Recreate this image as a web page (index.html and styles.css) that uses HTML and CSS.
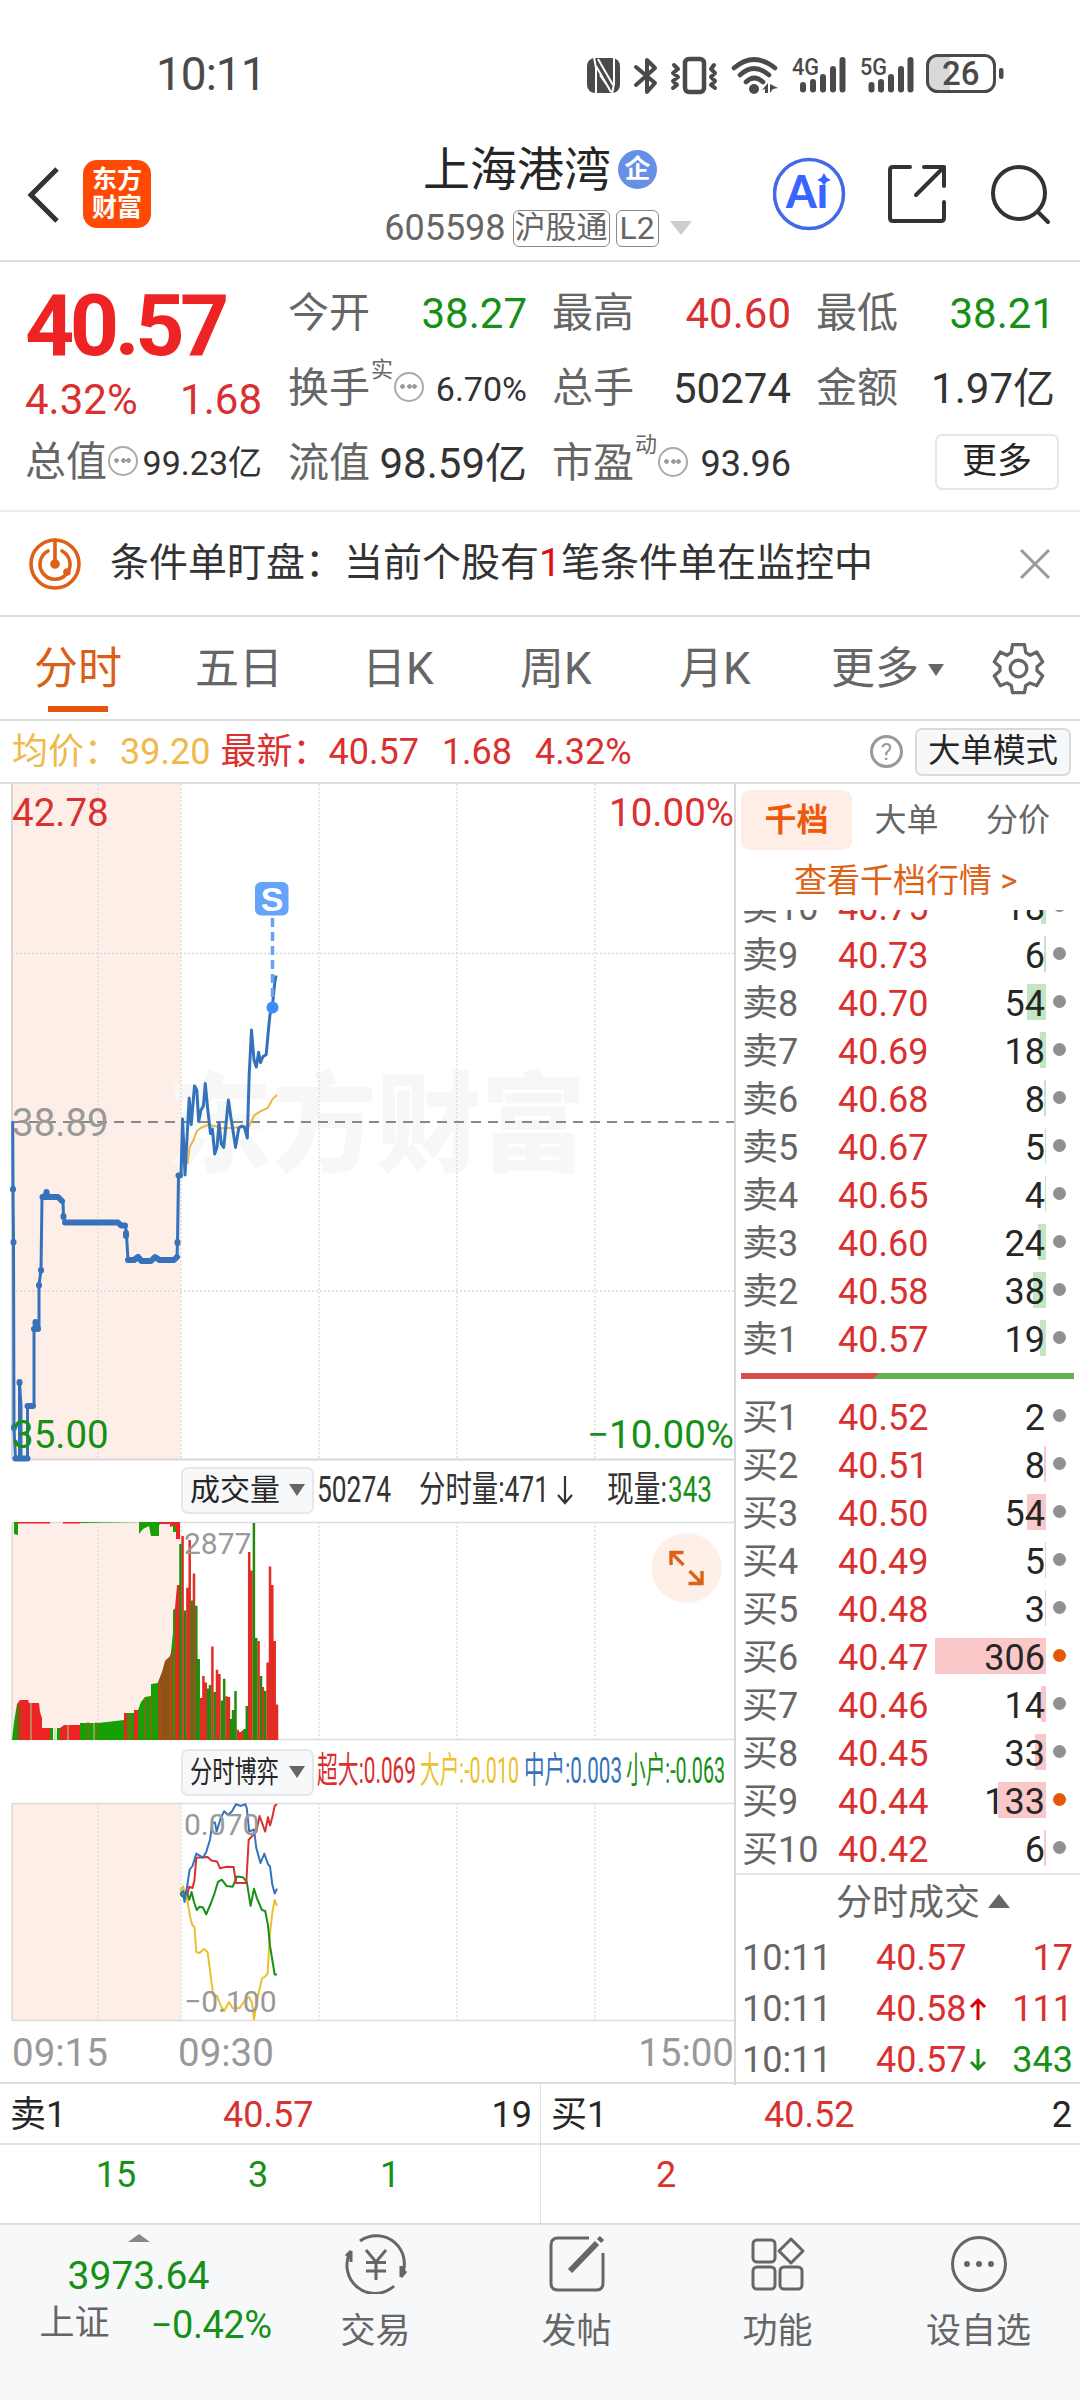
FILE: index.html
```html
<!DOCTYPE html>
<html lang="zh-CN">
<head>
    <meta charset="UTF-8">
    <meta name="viewport" content="width=device-width, initial-scale=1.0">
    <title>上海港湾 605598</title>
    <link rel="stylesheet" href="styles.css">
</head>
<body>
    <div class="status-bar">
        <span class="clock">10:11</span>
        <svg class="status-icons" width="430" height="44" viewBox="0 0 430 44">
            <!-- nfc -->
            <rect x="1" y="4" width="33" height="35" rx="8" fill="#4a4a4a"/>
            <path fill="none" stroke="#fff" stroke-width="2" d="M8 3L10 14V40M10 12L25 38M26 40L28 30V3M27 31L12 5M14 21L23 34"/>
            <!-- bluetooth -->
            <path fill="none" stroke="#4a4a4a" stroke-width="4" stroke-linejoin="round" stroke-linecap="round" d="M50 13L69 29L61 38V6L69 14L50 31"/>
            <!-- vibrate -->
            <rect x="99" y="5" width="19" height="33" rx="4" fill="none" stroke="#4a4a4a" stroke-width="4.5"/>
            <path fill="none" stroke="#4a4a4a" stroke-width="4" stroke-linecap="round" stroke-linejoin="round" d="M88 11L92 15L87 19L92 23L87 27L91 31L87 34M128 11L125 15L129 19L125 23L129 27L125 31L129 34"/>
            <!-- wifi -->
            <g fill="none" stroke="#4a4a4a" stroke-width="4.6" stroke-linecap="round">
                <path d="M148 14Q168 -3 189 14"/>
                <path d="M154 21Q168 8 183 21"/>
                <path d="M160 28Q168 20 177 28"/>
            </g>
            <circle cx="168" cy="35" r="5" fill="#4a4a4a"/>
            <path fill="#4a4a4a" d="M182 29V39H179V35L176 36ZM184 30L192 34L187 35L184 39Z"/>
            <!-- signals -->
            <text x="206" y="21" class="net" textLength="27" lengthAdjust="spacingAndGlyphs">4G</text>
            <text x="274" y="21" class="net" textLength="27" lengthAdjust="spacingAndGlyphs">5G</text>
            <g stroke="#4a4a4a" stroke-width="6" stroke-linecap="round">
                <path d="M217 31V35.500M227 28V35.500M237 23V35.500M247 15V35.500M256.500 6V35.500"/>
                <path d="M285.500 31V35.500M295 28V35.500M305 23V35.500M315 15V35.500M324.500 6V35.500"/>
            </g>
            <!-- battery -->
            <path fill="#d9d9d9" d="M352 2H364V38H352Q342 38 342 28V12Q342 2 352 2Z"/>
            <rect x="341.500" y="1.500" width="67" height="36" rx="10" fill="none" stroke="#4a4a4a" stroke-width="3"/>
            <rect x="413" y="14" width="4.500" height="11" rx="2" fill="#4a4a4a"/>
            <text x="356" y="31" class="level">26</text>
        </svg>
    </div>

    <header class="header">
        <svg class="back" width="36" height="60" viewBox="0 0 36 60"><path d="M30 4L4 30L30 56" fill="none" stroke="#333" stroke-width="5"/></svg>
        <div class="logo"><span>东方</span><span>财富</span></div>
        <div class="title">
            <div class="name">上海港湾<i class="corp">企</i></div>
            <div class="code">605598<span class="tag">沪股通</span><span class="tag">L2</span><i class="caret"></i></div>
        </div>
        <div class="actions">
            <svg width="74" height="74" viewBox="0 0 74 74">
                <circle cx="36" cy="37" r="34.500" fill="none" stroke="#4169e8" stroke-width="3.500"/>
                <text x="13" y="51" class="ai" textLength="42" lengthAdjust="spacingAndGlyphs">Ai</text>
                <rect x="43" y="15" width="16" height="13" fill="#fff"/>
                <path d="M51 16L53.500 20.500L58 23L53.500 25L51 29L48.500 25L44 23L48.500 20.500Z" fill="#3964fe"/>
            </svg>
            <svg width="60" height="60" viewBox="0 0 60 60" fill="none" stroke="#333" stroke-width="4" stroke-linecap="round" stroke-linejoin="round">
                <path d="M22 3H5Q2 3 2 6V54Q2 57 5 57H53Q56 57 56 54V38M36 3H56V22M56 3L28 31"/>
            </svg>
            <svg width="62" height="62" viewBox="0 0 62 62" fill="none" stroke="#333" stroke-width="4" stroke-linecap="round">
                <circle cx="30" cy="30" r="26"/><path d="M49 49L59 59"/>
            </svg>
        </div>
    </header>

    <section class="quote">
        <div class="last">
            <div class="price">40.57</div>
            <div class="change"><span>4.32%</span><span>1.68</span></div>
            <div class="cell"><label>总值<i class="dots"></i></label><b class="s33">99.23亿</b></div>
        </div>
        <div class="cells">
            <div class="cell"><label>今开</label><b class="green">38.27</b></div>
            <div class="cell"><label>最高</label><b class="red">40.60</b></div>
            <div class="cell"><label>最低</label><b class="green">38.21</b></div>
            <div class="cell"><label>换手<sup>实</sup><i class="dots"></i></label><b class="s33">6.70%</b></div>
            <div class="cell"><label>总手</label><b>50274</b></div>
            <div class="cell"><label>金额</label><b>1.97亿</b></div>
            <div class="cell"><label>流值</label><b>98.59亿</b></div>
            <div class="cell"><label>市盈<sup>动</sup><i class="dots"></i></label><b class="s36">93.96</b></div>
            <div class="cell end"><button class="more">更多</button></div>
        </div>
    </section>

    <div class="notice">
        <svg width="54" height="54" viewBox="0 0 54 54" fill="none" stroke="#dd6217" stroke-width="3.600">
            <circle cx="27" cy="27" r="24"/>
            <path d="M20 14A15 15 0 1 0 34 14M27 3V27" stroke-linecap="round"/>
            <circle cx="27" cy="27" r="3" fill="#dd6217"/><circle cx="39" cy="35" r="2" fill="#dd6217"/>
        </svg>
        <p>条件单盯盘：当前个股有<em>1</em>笔条件单在监控中</p>
        <svg width="32" height="32" viewBox="0 0 32 32"><path d="M2 2L30 30M30 2L2 30" stroke="#999" stroke-width="3"/></svg>
    </div>

    <nav class="periods">
        <a class="active">分时</a>
        <a>五日</a>
        <a>日K</a>
        <a>周K</a>
        <a>月K</a>
        <a>更多<i class="caret"></i></a>
        <svg width="53" height="53" viewBox="875 125 160 160" fill="none" stroke="#666" stroke-width="10" stroke-linejoin="round">
            <path d="M937 133H973L977 157L990 165L1010 155L1028 185L1011 200V212L1028 227L1010 257L990 249L977 256L973 278H937L933 256L920 249L900 257L882 227L899 212V200L882 185L900 155L920 165L933 157Z"/>
            <circle cx="955" cy="205" r="25"/>
        </svg>
    </nav>

    <div class="summary">
        <span class="avg">均价：</span><span class="avg num">39.20</span>
        <span class="red">最新：</span><span class="red num">40.57</span><span class="red num">1.68</span><span class="red num">4.32%</span>
        <i class="help">?</i>
        <button class="mode">大单模式</button>
    </div>

    <main class="board">
        <div class="charts">
            <!-- price -->
            <svg class="plot" width="734" height="678" viewBox="0 0 734 678">
                <rect x="12" y="0" width="169" height="675" fill="#fdeee7"/>
                <text x="167" y="379" class="watermark" textLength="419" lengthAdjust="spacingAndGlyphs">东方财富</text>
                <path class="grid" d="M98 0V675M181 0V675M319 0V675M457 0V675M595 0V675M12 169.500H734M12 507H734"/>
                <path d="M12 0V675M12 675.500H734" stroke="#d8d8d8" stroke-width="2"/>
                <path d="M12 338H734" stroke="#888" stroke-width="2" stroke-dasharray="10 7"/>
                <text x="12" y="42" class="axis" fill="#d93030">42.78</text>
                <text x="734" y="42" class="axis" fill="#d93030" text-anchor="end">10.00%</text>
                <text x="12" y="352" class="axis" fill="#999">38.89</text>
                <text x="734" y="664" class="axis" fill="#169016" text-anchor="end">−10.00%</text>
                <path fill="none" stroke="#ebb54a" stroke-width="2" d="M187.400 380L189.700 363L193.500 356L196.800 347L201 343.800L207.600 341L214.700 342L221.800 344.200L233.600 343.800L249 342L254.800 330.800L260.500 327.300L267.600 324L272.800 314.800L277 311"/>
                <path class="line" d="M12.700 337.500L13 405L13.500 458L14 643L15.500 675H19.500V598L21 622V675H27.500V622H34V545H39V501L41 486L42 413L46.500 408L50.500 413H59L63 417L63.500 433L64.500 438H118L121 441.500H125.500L126.500 451L128 476H134L138 472L141.500 477H151L155 473L159.500 475L174.500 476L177 473L177.500 458L178.500 391.500H181L182.600 335L185 391L189.200 314L191.200 340.600L194.500 302L196.800 306L198.700 337.500L201 326L203.400 322L205.300 299.600L207.600 324L210.500 349.600L212.400 345L214.700 370L217 363L219 339L221.300 360L223.700 363.400L228.400 316L230.800 333L233 346.400L235.500 363.400L238.800 344L242 342L244.500 343.300L247.300 354L249.200 290.600L251.500 246L254 276L256.300 283L258.600 268.300L260.500 278.600L262.900 272.800L266.200 270.500L268 250.500L270 230.400L272.300 223.200L274.700 199L276 191.500"/>
                <path class="ticks" d="M15.500 674.500H27.500M27.500 622H33M34 545H38M35.500 538V540M42.500 413H51M46.500 408V410M51 413H58L62 417M63.500 432V433M65 438.500H118L121 441.500H125M126 449V452M128 476H134L138 473L141.500 477H151L155 473L159.500 476H174L177 473M177.500 458V459M178.500 391.500H180M13 405V405.500M13.500 458V458.500M39 501V501.500M41 486V486.500M19.500 598V599M14 643V644"/>
                <text x="12" y="664" class="axis" fill="#169016">35.00</text>
                <path d="M272.500 134V220" stroke="#69a2f0" stroke-width="3.500" stroke-dasharray="9 5"/>
                <circle cx="272.500" cy="223.500" r="6" fill="#3e8bfa"/>
                <rect x="255" y="98" width="33.500" height="33.500" rx="6" fill="#66a3fb"/>
                <text x="272" y="126.500" class="badge" text-anchor="middle">S</text>
            </svg>

            <div class="toolbar volume">
                <button class="picker"><span>成交量</span><i class="caret"></i></button>
                <svg width="420" height="50" viewBox="0 0 420 50">
                    <text x="3" y="37" fill="#333" textLength="74" lengthAdjust="spacingAndGlyphs">50274</text>
                    <text x="105" y="37" fill="#333" textLength="130" lengthAdjust="spacingAndGlyphs">分时量:471</text>
                    <path d="M251 11V38M244 30L251 38L258 30" fill="none" stroke="#333" stroke-width="2.200"/>
                    <text x="293" y="37" fill="#333" textLength="60" lengthAdjust="spacingAndGlyphs">现量:</text>
                    <text x="354" y="37" fill="#169016" textLength="44" lengthAdjust="spacingAndGlyphs">343</text>
                </svg>
            </div>

            <svg class="plot" width="734" height="224" viewBox="0 -4 734 224">
                <rect x="12" y="0" width="169" height="218" fill="#fdeee7"/>
                <path class="grid" d="M98 0V218M181 0V218M319 0V218M457 0V218M595 0V218"/>
                <path d="M12 0V218M12 .5H734M12 217.500H734" stroke="#dcdcdc" stroke-width="1.500"/>
                <!-- call auction -->
                <path fill="#17a006" d="M12 218L14 200L17 182V218ZM50 218V206H53V218ZM57 218V206H60V218ZM80 218V201H98L124 198V218ZM127 218V191H134V218ZM138 218V188L141 180L145 175L151 174V162L158 161V218ZM170 218V140L173 110V88L176 86V218Z"/>
                <path fill="#ee2424" d="M17 218V182L20 178H28L29 181H39L40 190L42 196V206H50V218ZM60 218V206L64 203H80V218ZM124 218V191H127V218ZM134 218V188H138V218ZM158 218V161H160V218ZM175 218V86L177 63H180V218Z"/>
                <path fill="#8f5316" d="M17 218V182H21V218ZM158 218V160L162 150L165 139L170 134L173 125V218Z"/>
                <path stroke="#e03a26" stroke-width="1" d="M88 200V218M96 200V218M130 192V218M145 176V218M151 174V218M160 160V218M171 134V218"/>
                <path stroke="#8ce08c" stroke-width="1" d="M55 206V218M68 203V218M94 201V218M31 181V218"/>
                <path fill="#17a006" d="M14 0H18V13L14 12ZM80 0H139V12L143 7L149 4L151 14H159V3L163 0H80V1H139ZM173 0V10H176V0Z"/>
                <path fill="#ee2424" d="M18 0H50V1.500H18ZM63 0H80V1.500H63ZM159 0H180V17H176V3L170 5V2H159Z"/>
                <!-- continuous trading -->
                <path class="bar up" d="M182.600 14V218M187.400 65.800V218M189.700 18V218M194 51.500V218M201 176V218M203.400 154V218M205.800 160.500V218M212.400 124.500V218M217 147.800V218M219.400 152V218M226.500 174.300V218M228.900 175V218M237.800 207.800V218M240.200 210V218M242.600 208.600V218M249.200 30V218M251.500 48.600V218M258.600 119V218M262.900 165V218M267.600 140.400V218M270 44.500V218M272.300 63V218M274.700 119V218M277 182.500V218"/>
                <path class="bar down" d="M180.500 22V218M185 88.600V218M192 78.400V218M196.300 83.700V218M198.700 137V218M208 166.600V218M210 163V218M214.700 170V218M221.800 178.400V218M224.200 156.800V218M230.800 197V218M233 188V218M235.500 169V218M244.500 207V218M246.800 184V218M253.900 1V218M256.300 116V218M261 154V218M265.200 169V218"/>
                <text x="184" y="32" class="scale">2877</text>
                <circle cx="686.500" cy="46" r="35" fill="#feefe8"/>
                <path fill="none" stroke="#dd6217" stroke-width="3.400" d="M683.500 30.500H671V43M671.500 31L683.500 43M689.500 49L701.500 61M688.500 61.500H702V49"/>
            </svg>

            <div class="toolbar">
                <button class="picker"><span>分时博弈</span><i class="caret"></i></button>
                <svg width="420" height="50" viewBox="0 0 420 50">
                    <text x="3" y="36" fill="#d93030" textLength="99" lengthAdjust="spacingAndGlyphs">超大:0.069</text>
                    <text x="106" y="36" fill="#ecc02c" textLength="99" lengthAdjust="spacingAndGlyphs">大户:-0.010</text>
                    <text x="210" y="36" fill="#3572bb" textLength="98" lengthAdjust="spacingAndGlyphs">中户:0.003</text>
                    <text x="312" y="36" fill="#169016" textLength="99" lengthAdjust="spacingAndGlyphs">小户:-0.063</text>
                </svg>
            </div>

            <svg class="plot" width="734" height="221" viewBox="0 -1 734 221">
                <rect x="12" y="0" width="169" height="218" fill="#fdeee7"/>
                <path class="grid" d="M98 0V218M181 0V218M319 0V218M457 0V218M595 0V218"/>
                <path d="M12 0V218M12 .5H734M12 217.500H734" stroke="#dcdcdc" stroke-width="1.500"/>
                <g fill="none" stroke-width="2" stroke-linejoin="round">
                    <path stroke="#ecc02c" d="M180.300 88L183 83.300L187.400 98L190.200 114.300L192.500 122.400L194.500 124L196.300 149L199.600 150L204 146L207.600 149L210.500 171.400L213.300 192.700H217L220.400 202L224.200 208L229 199L232.700 205.300H239.300L245.400 196.700L249.200 194L252 200L254 216.300L257.200 196L262 175.500L265.200 173.500L267.600 170.600L270 130.600L272.300 110L274.700 97L277 102.900"/>
                    <path stroke="#169016" d="M180.300 91L183 93.900L186.400 87.800L189.200 96.700L191.600 89L194 99L196.800 107L199.600 103.700L203 104.500L206.200 111.400L211 100L214.700 89.800L218 78.800L221.800 76.700L226.500 82.900L232.700 83.700L237 73.500L243 74.300L246.800 78.800L250.600 102.900L254 85.700L257.200 96L262 107L265.200 108L268 122.400L270 142.900L274.700 171.400H277"/>
                    <path stroke="#d93030" d="M187.400 91.800L189.200 83.700L192.500 85L194.400 77.600L196.300 54.700L207.600 54L211.400 57.600L217 58.400L220 65.300L226.500 63.700L233.600 64L236 80H246.300L248.700 36.700L253.400 31.800L256.300 28.600L259.600 13L265.200 28.600L268 14.300L270 22.400L272.300 14.300L274.700 2.900L277 1.200"/>
                    <path stroke="#3572bb" d="M180.300 91L183 88L184.500 99L187.400 81.600L189.700 66.500L192.500 63L196.300 50.600L203 54.700L206.200 49L210 36.700L212.400 19.600H215L216.600 28.600L221 14.300L224.200 8.200L228 12L232.200 8L236 1.200L240.700 2.900L245.400 1.200L246.800 5.300L249.200 28.600L254 26.500L256.300 45L260.500 60L264.300 50.600L268 61.200L270 63.300L272.300 81.600L274.700 90.600L277 85.700"/>
                </g>
                <text x="184" y="32" class="scale">0.070</text>
                <text x="184" y="209" class="scale">−0.100</text>
            </svg>

            <div class="times"><span>09:15</span><span>09:30</span><span>15:00</span></div>
        </div>

        <aside class="side">
            <div class="tabs"><a class="active">千档</a><a>大单</a><a>分价</a></div>
            <a class="link">查看千档行情 &gt;</a>
            <div class="book">
                <ul class="sell">
                    <li><span>卖10</span><em>40.75</em><b style="--w:5px">18</b><i></i></li>
                    <li><span>卖9</span><em>40.73</em><b style="--w:2px">6</b><i></i></li>
                    <li><span>卖8</span><em>40.70</em><b style="--w:19px">54</b><i></i></li>
                    <li><span>卖7</span><em>40.69</em><b style="--w:6px">18</b><i></i></li>
                    <li><span>卖6</span><em>40.68</em><b style="--w:2px">8</b><i></i></li>
                    <li><span>卖5</span><em>40.67</em><b style="--w:1px">5</b><i></i></li>
                    <li><span>卖4</span><em>40.65</em><b style="--w:1px">4</b><i></i></li>
                    <li><span>卖3</span><em>40.60</em><b style="--w:8px">24</b><i></i></li>
                    <li><span>卖2</span><em>40.58</em><b style="--w:13px">38</b><i></i></li>
                    <li><span>卖1</span><em>40.57</em><b style="--w:6px">19</b><i></i></li>
                </ul>
                <div class="ratio"></div>
                <ul class="buy">
                    <li><span>买1</span><em>40.52</em><b style="--w:0px">2</b><i></i></li>
                    <li><span>买2</span><em>40.51</em><b style="--w:2px">8</b><i></i></li>
                    <li><span>买3</span><em>40.50</em><b style="--w:19px">54</b><i></i></li>
                    <li><span>买4</span><em>40.49</em><b style="--w:1px">5</b><i></i></li>
                    <li><span>买5</span><em>40.48</em><b style="--w:1px">3</b><i></i></li>
                    <li><span>买6</span><em>40.47</em><b style="--w:111px">306</b><i class="big"></i></li>
                    <li><span>买7</span><em>40.46</em><b style="--w:5px">14</b><i></i></li>
                    <li><span>买8</span><em>40.45</em><b style="--w:11px">33</b><i></i></li>
                    <li><span>买9</span><em>40.44</em><b style="--w:48px">133</b><i class="big"></i></li>
                    <li><span>买10</span><em>40.42</em><b style="--w:2px">6</b><i></i></li>
                </ul>
            </div>
            <div class="deals-title">分时成交<i class="caret up"></i></div>
            <ul class="deals">
                <li><span>10:11</span><em>40.57</em><b class="red">17</b></li>
                <li><span>10:11</span><em>40.58<svg width="18" height="24" viewBox="0 0 18 24"><path d="M9 23V3M2 10L9 3L16 10" fill="none" stroke="#d80000" stroke-width="3"/></svg></em><b class="red">111</b></li>
                <li><span>10:11</span><em>40.57<svg width="18" height="24" viewBox="0 0 18 24"><path d="M9 1V21M2 14L9 21L16 14" fill="none" stroke="#169016" stroke-width="3"/></svg></em><b class="green">343</b></li>
            </ul>
        </aside>
    </main>

    <section class="queues">
        <div class="queue">
            <div class="queue-head"><span>卖1</span><em>40.57</em><b>19</b></div>
            <div class="queue-body green"><span>15</span><span>3</span><span>1</span></div>
        </div>
        <div class="queue">
            <div class="queue-head"><span>买1</span><em>40.52</em><b>2</b></div>
            <div class="queue-body red"><span>2</span></div>
        </div>
    </section>

    <footer class="footer">
        <div class="index">
            <i class="caret up"></i>
            <strong>3973.64</strong>
            <div><span>上证</span><span class="green">−0.42%</span></div>
        </div>
        <a>
            <svg width="68" height="60" viewBox="0 0 68 60" fill="none" stroke="#666" stroke-width="3">
                <path d="M18 7A28 28 0 0 1 59 43L64 37M59 43V32M52 52A28 28 0 0 1 9 17L4 22M9 17V28"/>
                <path d="M24 16L34 28L44 16M34 28V46M24 28.500H44M24 37H44"/>
            </svg>
            交易
        </a>
        <a>
            <svg width="60" height="60" viewBox="0 0 60 60" fill="none" stroke="#666" stroke-width="3">
                <path d="M42 4H11Q4 4 4 11V49Q4 56 11 56H49Q56 56 56 49V19"/>
                <path d="M23 37L50 9" stroke-width="6"/><path d="M52 7L55 4" stroke-width="6"/>
            </svg>
            发帖
        </a>
        <a>
            <svg width="60" height="60" viewBox="0 0 60 60" fill="none" stroke="#666" stroke-width="3">
                <rect x="5" y="6" width="22" height="22" rx="4"/>
                <rect x="5" y="33" width="22" height="22" rx="4"/>
                <rect x="32" y="33" width="22" height="22" rx="4"/>
                <path d="M43 5L55 17L43 29L31 17Z" stroke-linejoin="round"/>
            </svg>
            功能
        </a>
        <a>
            <svg width="60" height="60" viewBox="0 0 60 60">
                <circle cx="30" cy="30" r="26.500" fill="none" stroke="#666" stroke-width="3"/>
                <circle cx="18" cy="30" r="3" fill="#666"/><circle cx="30" cy="30" r="3" fill="#666"/><circle cx="42" cy="30" r="3" fill="#666"/>
            </svg>
            设自选
        </a>
    </footer>
</body>
</html>
```
FILE: styles.css
```css
* {
    box-sizing: border-box;
    margin: 0;
    padding: 0;
}
body {
    width: 1080px;
    height: 2400px;
    overflow: hidden;
    background: #fff;
    color: #333;
    font-family: Roboto, "Noto Sans CJK SC", sans-serif;
    font-size: 36px;
    line-height: 1;
    white-space: nowrap;
    display: flex;
    flex-direction: column;
}
em, i {
    font-style: normal;
}
b {
    font-weight: normal;
}
ul {
    list-style: none;
}
svg {
    display: block;
    flex: none;
}
button {
    font-family: inherit;
    color: #262626;
    background: #fff;
    border: 2px solid #e6e6e6;
    border-radius: 7px;
    line-height: 1;
}
.red {
    color: #d93030;
}
.green {
    color: #169016;
}
.caret {
    display: inline-block;
    border: 8px solid transparent;
    border-top: 12px solid #666;
    border-bottom: 0;
}
.caret.up {
    border-top: 0;
    border-bottom: 12px solid #666;
}

/* status bar */
.status-bar {
    height: 130px;
    padding: 54px 64px 0 156px;
    display: flex;
    justify-content: space-between;
}
.clock {
    color: #4a4a4a;
    font-size: 46px;
    line-height: 40px;
    letter-spacing: -1px;
}
.net {
    font-size: 24px;
    font-weight: 500;
    fill: #4a4a4a;
}
.level {
    font-size: 33px;
    font-weight: 500;
    fill: #4a4a4a;
}

/* header */
.header {
    height: 132px;
    border-bottom: 2px solid #dcdcdc;
    display: grid;
    grid-template-columns: 56px 68px 1fr 278px;
    padding: 0 29px 0 27px;
}
.back {
    margin-top: 35px;
}
.logo {
    width: 68px;
    height: 68px;
    margin-top: 30px;
    border-radius: 14px;
    background: #ff4a05;
    color: #fff;
    font-size: 25px;
    font-weight: bold;
    line-height: 28px;
    padding-top: 6px;
    display: flex;
    flex-direction: column;
    align-items: center;
}
.title {
    display: flex;
    flex-direction: column;
    align-items: center;
    padding-left: 152px;
}
.name {
    display: flex;
    align-items: center;
    gap: 7px;
    height: 60px;
    margin-top: 9px;
    font-size: 47px;
    color: #262626;
    padding-left: 4px;
}
.corp {
    width: 39px;
    height: 39px;
    border-radius: 50%;
    background: #668fe6;
    color: #fff;
    font-size: 26px;
    font-weight: bold;
    line-height: 38px;
    text-align: center;
}
.code {
    display: flex;
    align-items: center;
    height: 38px;
    margin-top: 10px;
    color: #666;
}
.tag {
    height: 37px;
    border: 1.500px solid #888;
    border-radius: 6px;
    font-size: 31px;
    line-height: 34px;
    padding: 0 1px;
    margin-left: 7px;
}
.tag + .tag {
    padding: 0 3px;
    font-size: 32px;
    margin-left: 6px;
}
.code .caret {
    border-width: 14px 11px 0;
    border-top-color: #ccc;
    margin-left: 11px;
}
.actions {
    display: flex;
    align-items: center;
    justify-content: space-between;
    height: 128px;
}
.ai {
    font-family: Lato, sans-serif;
    font-size: 45px;
    font-weight: 900;
    fill: #3964fe;
}

/* quote */
.quote {
    height: 250px;
    padding: 14px 26px 0 25px;
    border-bottom: 2px solid #ebebeb;
    display: grid;
    grid-template-columns: 237px 766px;
    gap: 26px;
}
.price {
    height: 99px;
    color: #ee2424;
    font-size: 86px;
    font-weight: bold;
    line-height: 99px;
    letter-spacing: -4.500px;
}
.change {
    height: 50px;
    color: #d93030;
    font-size: 42px;
    line-height: 50px;
    display: flex;
    justify-content: space-between;
}
.cells {
    display: grid;
    grid-template-columns: repeat(3, 239px);
    grid-auto-rows: 75px;
    column-gap: 25px;
}
.cell {
    height: 75px;
    display: flex;
    align-items: center;
    justify-content: space-between;
    font-size: 42px;
}
.cell label {
    display: flex;
    align-items: center;
    color: #666;
    font-size: 41px;
}
.cell sup {
    align-self: flex-start;
    font-size: 22px;
    margin: -9px 0 0 1px;
}
.dots {
    width: 30px;
    height: 30px;
    margin: -4px 0 0 1px;
    border: 2.500px solid #aaa;
    border-radius: 50%;
    background: radial-gradient(circle, #999 2px, transparent 2.500px) 50% 50% / 7px 7px no-repeat,
        radial-gradient(circle, #999 2px, transparent 2.500px) 3px 50% / 7px 7px no-repeat,
        radial-gradient(circle, #999 2px, transparent 2.500px) 15px 50% / 7px 7px no-repeat;
}
.cell .s33 {
    font-size: 34px;
}
.cell .s36 {
    font-size: 36px;
}
.cell.end {
    justify-content: flex-end;
    margin-right: -4px;
}
.more {
    width: 124px;
    height: 56px;
    margin-top: -4px;
    font-size: 35px;
}

/* notice */
.notice {
    height: 105px;
    padding: 0 29px 0 28px;
    border-bottom: 2px solid #dcdcdc;
    display: flex;
    align-items: center;
    font-size: 39px;
}
.notice p {
    flex: 1;
    margin-left: 28px;
}
.notice em {
    color: #e01010;
}

/* period tabs */
.periods {
    height: 104px;
    padding: 0 0 0 34px;
    border-bottom: 2px solid #dcdcdc;
    display: grid;
    grid-template-columns: 161px 167px 158px 159px 152px 161px 53px;
    align-items: center;
    justify-items: start;
    color: #666;
    font-size: 44px;
}
.periods a {
    height: 102px;
    line-height: 104px;
}
.periods .active {
    color: #d95f18;
    background: linear-gradient(#e5570b, #e5570b) 50% 89px / 60px 6px no-repeat;
}
.periods .caret {
    margin-left: 9px;
    vertical-align: 8px;
}

.summary {
    height: 63px;
    padding: 0 9px 0 12px;
    border-bottom: 2px solid #dcdcdc;
    display: flex;
    align-items: center;
}
.summary .num {
    margin-right: 23px;
}
.summary .avg {
    color: #efb94c;
}
.summary .avg.num {
    margin-right: 10px;
}
.help {
    width: 33px;
    height: 33px;
    margin-left: auto;
    margin-right: 12px;
    border: 3px solid #999;
    border-radius: 50%;
    color: #999;
    font-size: 24px;
    line-height: 28px;
    text-align: center;
}
.mode {
    width: 156px;
    height: 48px;
    font-size: 32.500px;
    background: #f7f8fa;
    border-color: #d8dadc;
}

/* charts */
.board {
    height: 1300px;
    display: grid;
    grid-template-columns: 734px 346px;
    border-bottom: 2px solid #dcdcdc;
}
.grid {
    stroke: #dadada;
    stroke-width: 1.300;
    stroke-dasharray: 2 2;
}
.axis {
    font-size: 38.500px;
}
.watermark {
    font-size: 108px;
    font-weight: 900;
    fill: #f7f7f7;
}
.line {
    fill: none;
    stroke: #3572bb;
    stroke-width: 3;
    stroke-linejoin: round;
}
.ticks {
    fill: none;
    stroke: #3572bb;
    stroke-width: 6;
    stroke-linecap: round;
    stroke-linejoin: round;
}
.badge {
    font-family: "Liberation Sans", sans-serif;
    font-size: 34px;
    font-weight: bold;
    fill: #fff;
}
.bar {
    stroke-width: 2.500;
}
.bar.up {
    stroke: #e22c24;
}
.bar.down {
    stroke: #258a0c;
}
.scale {
    font-size: 30px;
    fill: #999;
}
.toolbar {
    height: 60px;
    padding-left: 181px;
    display: flex;
    align-items: center;
}
.toolbar.volume {
    height: 56px;
}
.picker {
    width: 133px;
    height: 47px;
    font-size: 30px;
    background: #f7f8fa;
    border-color: #e6e7ea;
    display: flex;
    align-items: center;
    justify-content: space-between;
    padding: 0 7px;
}
.toolbar:not(.volume) .picker span {
    width: 88px;
    transform: scaleX(.74);
    transform-origin: 0 50%;
}
.toolbar svg {
    font-size: 36px;
}
.times {
    height: 60px;
    padding: 0 0 0 12px;
    display: flex;
    align-items: center;
    color: #999;
    font-size: 38.500px;
}
.times span {
    width: 166px;
}
.times span:last-child {
    width: auto;
    margin-left: auto;
}

/* order book */
.side {
    border-left: 2px solid #d8d8d8;
}
.tabs {
    height: 72px;
    padding: 6px 5px 0;
    display: grid;
    grid-template-columns: 111px 109px 114px;
    font-size: 32px;
    line-height: 61px;
    text-align: center;
    color: #666;
}
.tabs .active {
    height: 60px;
    border-radius: 9px;
    background: #feeee6;
    color: #ee5a0c;
    font-weight: bold;
}
.link {
    display: block;
    height: 54px;
    padding-left: 58px;
    color: #dd6217;
    font-size: 33px;
    line-height: 50px;
}
.book {
    height: 963px;
    overflow: hidden;
}
.sell {
    margin-top: -28px;
}
.book li {
    height: 48px;
    padding-left: 6px;
    display: grid;
    grid-template-columns: 96px 95px 115px 1fr;
    align-items: center;
}
.book span, .book em {
    line-height: 44px;
    padding-top: 4px;
}
.book span, .deals span {
    color: #666;
}
.book em, .deals em {
    color: #d93030;
}
.book b {
    width: 111px;
    height: 36px;
    line-height: 34px;
    padding: 3px 1px 0 0;
    margin-left: auto;
    margin-right: 2px;
    text-align: right;
    color: #262626;
    background: linear-gradient(#c2e6c3, #c2e6c3) 100% 0 / var(--w) 100% no-repeat;
}
.book .buy b {
    background-image: linear-gradient(#fac8c8, #fac8c8);
}
.book i {
    width: 13px;
    height: 13px;
    margin: 0 0 2px 5px;
    border-radius: 50%;
    background: #8f8f94;
}
.book .big {
    background: #e5570b;
}
.ratio {
    height: 6px;
    margin: 11px 6px 13px 5px;
    background: linear-gradient(135deg, #db4c4c 97px, #62b54e 98px);
}
.deals-title {
    height: 59px;
    border-top: 2px solid #e6e6e6;
    color: #666;
    line-height: 57px;
    padding-left: 100px;
}
.deals-title .caret {
    border-width: 0 11px 14px;
    margin-left: 8px;
    vertical-align: 7px;
}
.deals li {
    height: 51px;
    padding: 0 7px 0 6px;
    display: flex;
    align-items: center;
}
.deals span {
    width: 134px;
}
.deals em {
    display: flex;
    align-items: center;
    gap: 3px;
}
.deals b {
    margin-left: auto;
}

/* queues */
.queues {
    height: 141px;
    display: grid;
    grid-template-columns: 1fr 1fr;
    border-bottom: 2px solid #dcdcdc;
}
.queue + .queue {
    border-left: 1px solid #e0e0e0;
}
.queue-head {
    height: 61px;
    padding: 2px 8px 0 10px;
    border-bottom: 2px solid #e0e3e3;
    display: grid;
    grid-template-columns: 213px 90px 1fr;
    align-items: center;
    color: #262626;
}
.queue-head em {
    color: #d93030;
}
.queue-head b {
    text-align: right;
}
.queue-body {
    height: 60px;
    padding-left: 50px;
    display: grid;
    grid-template-columns: 132px 152px 112px;
    align-items: center;
    text-align: center;
}
.queue:last-child .queue-body {
    padding-left: 59px;
}

/* footer */
.footer {
    flex: 1;
    background: #f7f8fa;
    color: #666;
    display: grid;
    grid-template-columns: 275px repeat(4, 201px);
}
.footer a {
    display: flex;
    flex-direction: column;
    align-items: center;
    padding-top: 9px;
    gap: 20px;
    font-size: 35px;
}
.index {
    display: flex;
    flex-direction: column;
    align-items: center;
    padding: 9px 0 0 2px;
}
.index .caret {
    border-width: 0 11px 8px;
    border-bottom-color: #888;
}
.index strong {
    margin: 15px 0 10px;
    font-weight: normal;
    font-size: 39px;
    color: #169016;
}
.index div {
    width: 232px;
    margin-left: 34px;
    display: flex;
    justify-content: space-between;
    font-size: 35px;
}
.footer .green {
    font-size: 38px;
    letter-spacing: -.500px;
}
```
